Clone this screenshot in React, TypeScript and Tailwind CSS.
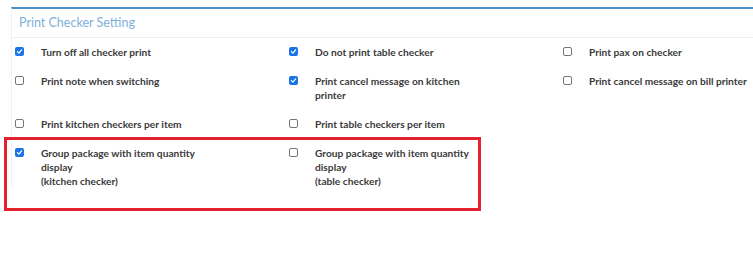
import React from "react";

type Item = { label: React.ReactNode; checked: boolean };

const rows: Item[][] = [
  [
    { label: "Turn off all checker print", checked: true },
    { label: "Do not print table checker", checked: true },
    { label: "Print pax on checker", checked: false },
  ],
  [
    { label: "Print note when switching", checked: false },
    { label: "Print cancel message on kitchen printer", checked: true },
    { label: "Print cancel message on bill printer", checked: false },
  ],
  [
    { label: "Print kitchen checkers per item", checked: false },
    { label: "Print table checkers per item", checked: false },
  ],
  [
    {
      label: (
        <>
          Group package with item quantity display
          <br />
          (kitchen checker)
        </>
      ),
      checked: true,
    },
    {
      label: (
        <>
          Group package with item quantity display
          <br />
          (table checker)
        </>
      ),
      checked: false,
    },
  ],
];

function Box({ checked }: { checked: boolean }) {
  if (checked) {
    return (
      <span className="mt-[2px] flex h-[9px] w-[9px] shrink-0 items-center justify-center rounded-[2px] bg-[#1a73e8]">
        <svg viewBox="0 0 10 10" className="h-[7px] w-[7px]">
          <path d="M2 5.2 L4.2 7.3 L8 2.6" fill="none" stroke="white" strokeWidth="1.8" strokeLinecap="round" strokeLinejoin="round" />
        </svg>
      </span>
    );
  }
  return <span className="mt-[2px] h-[9px] w-[9px] shrink-0 rounded-[2px] border border-[#767676] bg-white" />;
}

export default function App() {
  return (
    <div className="relative h-[260px] w-[753px] bg-white pt-[7px] font-['Source_Sans_Pro','Lato','Liberation_Sans',sans-serif]">
      <div className="ml-[11px] border-l border-t-2 border-l-[#f0f0f0] border-t-[#4a8fc7]">
        <div className="flex h-[29px] items-center border-b border-[#f0f0f0] pl-[7px] text-[12.5px] text-[#7eb0da]">
          Print Checker Setting
        </div>
        <div className="flex flex-col gap-[15px] pt-[7px] text-[10.2px] font-bold leading-[14px] text-[#3a3a3a]">
          {rows.map((row, i) => (
            <div key={i} className="ml-[-8px] grid grid-cols-[274px_274px_1fr]">
              {row.map((item, j) => (
                <label key={j} className="flex gap-[17px] pl-[11px]">
                  <Box checked={item.checked} />
                  <span className="w-[162px]">{item.label}</span>
                </label>
              ))}
            </div>
          ))}
        </div>
      </div>
      <div className="pointer-events-none absolute left-[4px] top-[137px] h-[74px] w-[477px] border-[3px] border-[#e3212f]" />
    </div>
  );
}
